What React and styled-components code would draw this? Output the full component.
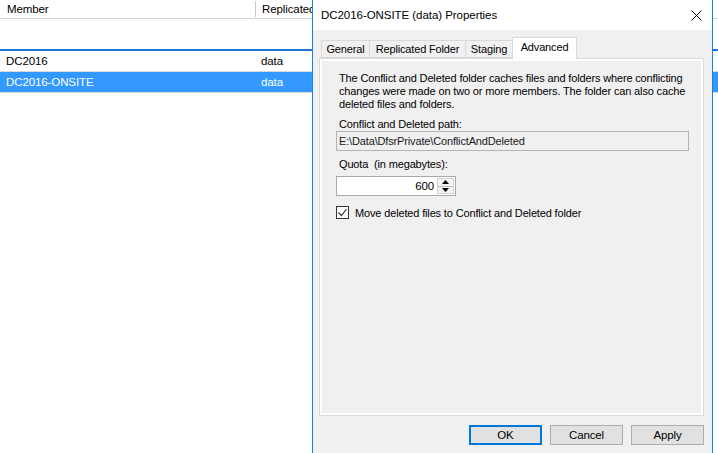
import React from 'react'
import styled, { createGlobalStyle } from 'styled-components'

const GlobalStyle = createGlobalStyle`
    html, body {
        margin: 0;
        padding: 0;
        background: #ffffff;
    }
    body {
        font-family: "Liberation Sans", Arial, sans-serif;
        font-size: 11px;
        letter-spacing: -0.15px;
        color: #000000;
    }
`

const Screen = styled.div`
    position: relative;
    width: 718px;
    height: 453px;
    overflow: hidden;
    background: #ffffff;
`

// background list view
const ListHeader = styled.div`
    display: flex;
    height: 18px;
    border-bottom: 1px solid #d5d5d5;
    background: #ffffff;
`
const HeaderCell = styled.div`
    display: flex;
    align-items: center;
    width: ${(props) => props.width}px;
    padding-left: ${(props) => props.pad}px;
    box-sizing: border-box;
    font-size: 11.5px;
    letter-spacing: -0.1px;
    white-space: nowrap;
    overflow: hidden;
    border-right: ${(props) => (props.divider ? '1px solid #c8c8c8' : 'none')};
    height: 16px;
    margin-top: 1px;
`
const GroupGap = styled.div`
    height: 30px;
    border-bottom: 2px solid #1e74cc;
`
const Row = styled.div`
    display: flex;
    align-items: center;
    height: 20px;
    border-bottom: 1px solid #d9d9d9;
    background: ${(props) => (props.selected ? '#3399ff' : '#ffffff')};
    color: ${(props) => (props.selected ? '#ffffff' : '#000000')};
    font-size: 11.5px;
    letter-spacing: -0.1px;
`
const Cell = styled.div`
    width: ${(props) => props.width}px;
    padding-left: ${(props) => props.pad}px;
    box-sizing: border-box;
    white-space: nowrap;
`

// dialog window
const Dialog = styled.div`
    position: absolute;
    left: 312px;
    top: 0;
    width: 401px;
    height: 470px;
    box-sizing: border-box;
    border-left: 1px solid #1883d7;
    border-right: 1px solid #1883d7;
    background: #f0f0f0;
    display: flex;
    flex-direction: column;
`
const TitleBar = styled.div`
    height: 30px;
    background: #ffffff;
    display: flex;
    align-items: center;
    justify-content: space-between;
    padding: 0 10px 0 8px;
    font-size: 11.5px;
    letter-spacing: -0.05px;
`
const Body = styled.div`
    padding: 7px 8px 0 6px;
    display: flex;
    flex-direction: column;
`
const TabStrip = styled.div`
    display: flex;
    align-items: flex-end;
    height: 21px;
    padding-left: 2px;
    position: relative;
    z-index: 1;
`
const Tab = styled.div`
    width: ${(props) => props.width}px;
    box-sizing: border-box;
    padding-bottom: ${(props) => (props.active ? 3 : 0)}px;
    margin-left: ${(props) => (props.active ? -1 : 0)}px;
    border: 1px solid #d9d9d9;
    border-left-width: ${(props) => (props.first || props.active ? 1 : 0)}px;
    border-bottom: ${(props) => (props.active ? 'none' : '1px solid #d9d9d9')};
    background: ${(props) => (props.active ? '#ffffff' : '#f0f0f0')};
    display: flex;
    align-items: center;
    justify-content: center;
    white-space: nowrap;
    margin-bottom: ${(props) => (props.active ? -1 : 0)}px;
    height: ${(props) => (props.active ? 22 : 18)}px;
`
const Panel = styled.div`
    height: 358px;
    box-sizing: border-box;
    border: 1px solid #d9d9d9;
    box-shadow: inset 0 0 0 2px #ffffff;
    padding: 13px 16px 0 16px;
    display: flex;
    flex-direction: column;
`
const Paragraph = styled.div`
    line-height: 13px;
    padding-left: 3px;
    white-space: nowrap;
`
const Label = styled.div`
    padding-left: 3px;
    margin-top: ${(props) => props.top}px;
    line-height: 13px;
`
const PathBox = styled.div`
    width: 353px;
    height: 20px;
    box-sizing: border-box;
    border: 1px solid #b4b4b4;
    background: #f0f0f0;
    display: flex;
    align-items: center;
    padding-left: 2px;
    color: #1a1a1a;
`
const Spin = styled.div`
    margin-top: 5px;
    width: 120px;
    height: 20px;
    box-sizing: border-box;
    border: 1px solid #a9a9a9;
    background: #ffffff;
    display: flex;
    align-items: stretch;
`
const SpinValue = styled.div`
    flex: 1;
    display: flex;
    align-items: center;
    justify-content: flex-end;
    padding-right: 2px;
    font-size: 11.5px;
`
const SpinButtons = styled.div`
    width: 15px;
    margin: 1px;
    display: flex;
    flex-direction: column;
    border: 1px solid #d2d2d2;
    background: #f4f4f4;
`
const SpinButton = styled.div`
    flex: 1;
    display: flex;
    align-items: center;
    justify-content: center;
    border-top: ${(props) => (props.down ? '1px solid #bfbfbf' : 'none')};
`
const CheckRow = styled.div`
    display: flex;
    align-items: center;
    gap: 6px;
    height: 13px;
    margin-top: 10px;
`
const Box = styled.div`
    width: 13px;
    height: 13px;
    box-sizing: border-box;
    border: 1px solid #333333;
    background: #ffffff;
    display: flex;
    align-items: center;
    justify-content: center;
`
const ButtonRow = styled.div`
    display: flex;
    justify-content: flex-end;
    gap: 8px;
    margin-top: 9px;
`
const Button = styled.div`
    width: 73px;
    height: 20px;
    box-sizing: border-box;
    border: ${(props) => (props.primary ? '2px solid #0078d7' : '1px solid #adadad')};
    background: #e1e1e1;
    display: flex;
    align-items: center;
    justify-content: center;
    font-size: 11.5px;
`

const CloseIcon = () => (
    <svg width="11" height="11" viewBox="0 0 11 11">
        <path d="M0.5 0.5 L10.5 10.5 M10.5 0.5 L0.5 10.5" stroke="#000" strokeWidth="1" />
    </svg>
)

const App = () => (
    <Screen>
        <GlobalStyle />
        <ListHeader>
            <HeaderCell width={256} pad={7} divider>
                Member
            </HeaderCell>
            <HeaderCell width={56} pad={6}>
                Replicated Folder
            </HeaderCell>
        </ListHeader>
        <GroupGap />
        <Row>
            <Cell width={256} pad={6}>DC2016</Cell>
            <Cell width={56} pad={5}>data</Cell>
        </Row>
        <Row selected>
            <Cell width={256} pad={6}>DC2016-ONSITE</Cell>
            <Cell width={56} pad={5}>data</Cell>
        </Row>

        <Dialog>
            <TitleBar>
                <span>DC2016-ONSITE (data) Properties</span>
                <CloseIcon />
            </TitleBar>
            <Body>
                <TabStrip>
                    <Tab first width={49}>General</Tab>
                    <Tab width={96}>Replicated Folder</Tab>
                    <Tab width={47}>Staging</Tab>
                    <Tab active width={65}>Advanced</Tab>
                </TabStrip>
                <Panel>
                    <Paragraph>
                        The Conflict and Deleted folder caches files and folders where conflicting
                        <br />
                        changes were made on two or more members. The folder can also cache
                        <br />
                        deleted files and folders.
                    </Paragraph>
                    <Label top={7}>Conflict and Deleted path:</Label>
                    <PathBox>E:\Data\DfsrPrivate\ConflictAndDeleted</PathBox>
                    <Label top={7}>Quota&nbsp; (in megabytes):</Label>
                    <Spin>
                        <SpinValue>600</SpinValue>
                        <SpinButtons>
                            <SpinButton>
                                <svg width="7" height="4" viewBox="0 0 7 4">
                                    <path d="M3.5 0 L7 4 L0 4 Z" fill="#000" />
                                </svg>
                            </SpinButton>
                            <SpinButton down>
                                <svg width="7" height="4" viewBox="0 0 7 4">
                                    <path d="M0 0 L7 0 L3.5 4 Z" fill="#000" />
                                </svg>
                            </SpinButton>
                        </SpinButtons>
                    </Spin>
                    <CheckRow>
                        <Box>
                            <svg width="11" height="11" viewBox="0 0 11 11">
                                <path d="M1.5 5.5 L4.5 8.5 L9.5 2" stroke="#333" strokeWidth="1.2" fill="none" />
                            </svg>
                        </Box>
                        <span>Move deleted files to Conflict and Deleted folder</span>
                    </CheckRow>
                </Panel>
                <ButtonRow>
                    <Button primary>OK</Button>
                    <Button>Cancel</Button>
                    <Button>Apply</Button>
                </ButtonRow>
            </Body>
        </Dialog>
    </Screen>
)

export default App
